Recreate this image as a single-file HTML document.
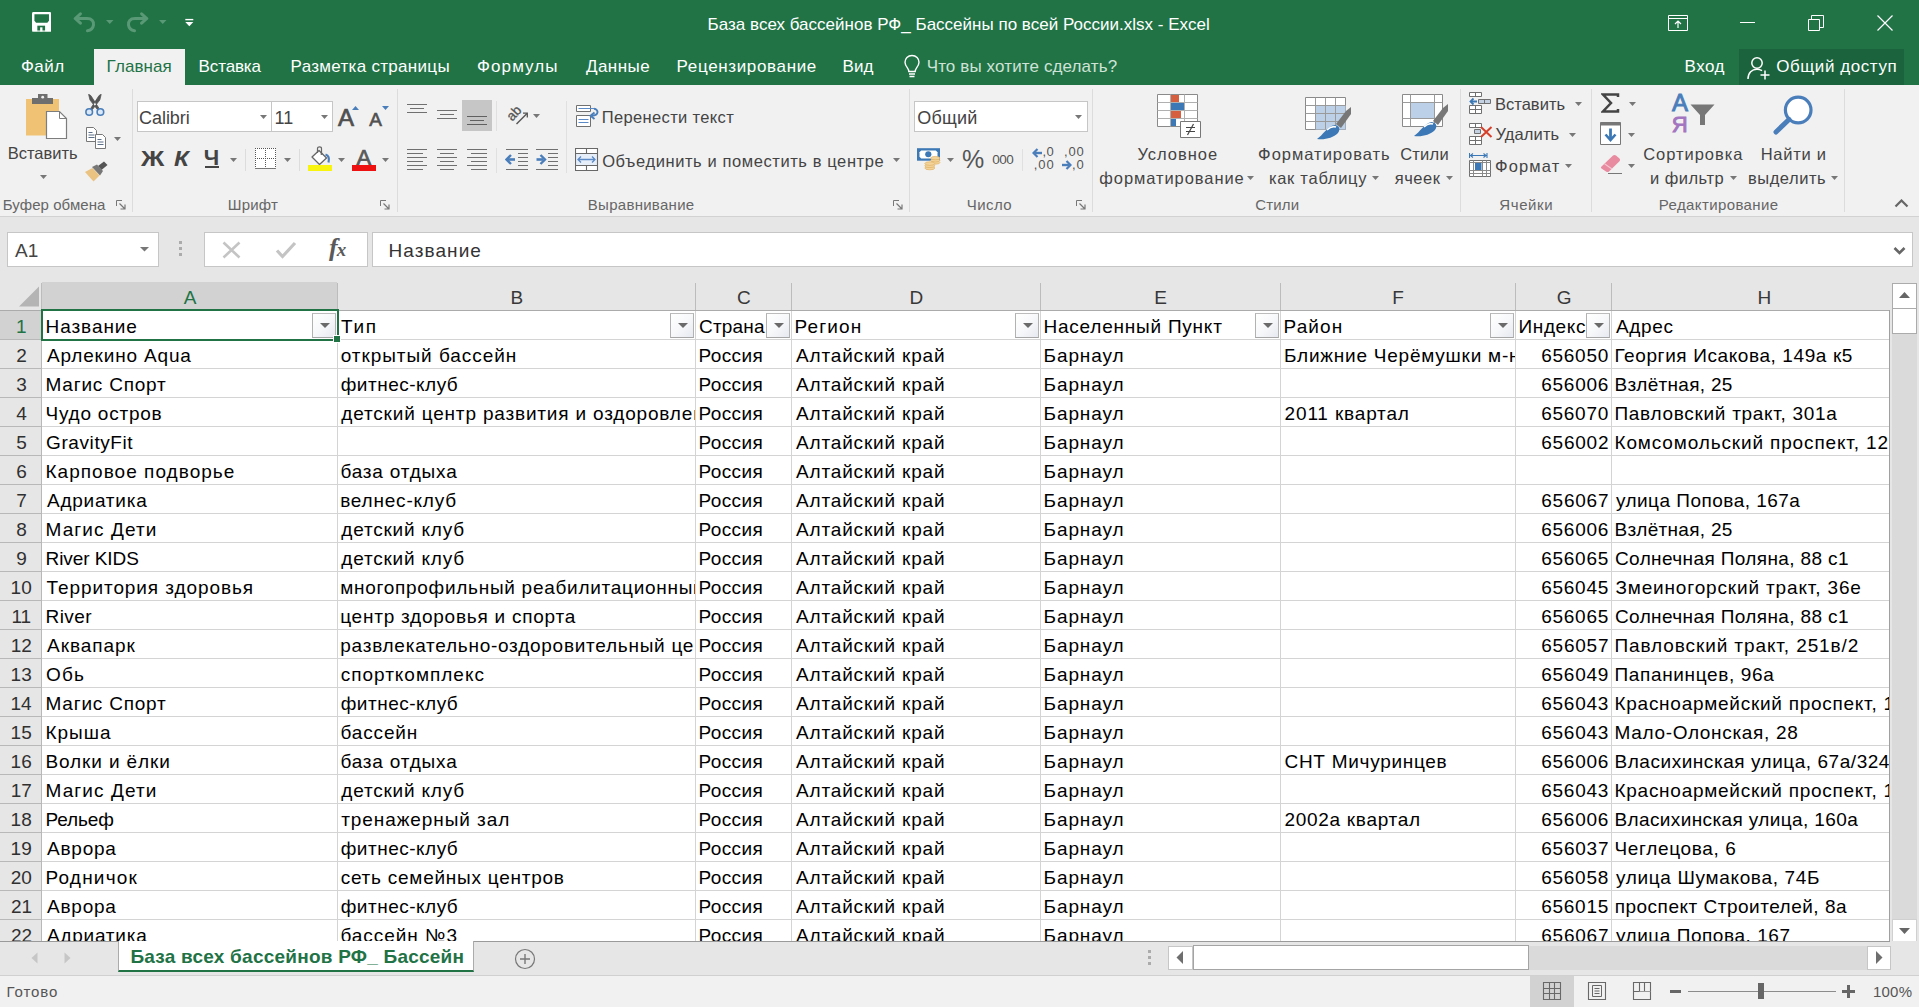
<!DOCTYPE html>
<html lang="ru"><head><meta charset="utf-8"><title>Excel</title><style>
html,body{margin:0;padding:0;}
body{width:1919px;height:1007px;overflow:hidden;position:relative;background:#e6e6e6;font-family:"Liberation Sans",sans-serif;}
div,span,svg{position:absolute;}
span{white-space:nowrap;}
.rowclip{left:0;width:337px;overflow:hidden;}
.cc{overflow:hidden;}
.fb{width:24px;height:25px;box-sizing:border-box;border:1px solid #b2b2b2;border-top-color:#bcbcbc;border-bottom:1px solid #a6a6a6;background:linear-gradient(135deg,#ffffff 0%,#f7f8fa 50%,#e6e9f0 100%);}
.fb i{position:absolute;left:6.5px;top:9px;width:0;height:0;border-left:5px solid transparent;border-right:5px solid transparent;border-top:5.5px solid #6a6a6a;}
</style></head><body>
<!-- title -->
<div style="left:0px;top:0px;width:1919px;height:85px;background:#217346;"></div>
<div style="left:94px;top:49px;width:91px;height:37px;background:#f1f1f1;"></div>
<svg style="left:32px;top:12px" width="19.400" height="19.600" viewBox="0 0 20 20"><rect x="0" y="0" width="20" height="20" rx="1.500" fill="#fff"/><path d="M2.500 2.200H17.500V9L15.800 11H4.200L2.500 9Z" fill="#217346"/><path d="M5.500 14H13.500V20H5.500Z" fill="#217346"/><path d="M8.400 15.700H10.800V20H8.400Z" fill="#fff"/><path d="M0 19H20V20H0Z" fill="#fff"/></svg>
<svg style="left:73px;top:12px" width="24" height="22" viewBox="0 0 24 22"><g fill="none" stroke="#5a9975" stroke-width="3" stroke-linecap="round" stroke-linejoin="round"><path d="M7.400 1.800L2.200 6.500L7.400 11.200"/><path d="M3 6.500H14C19 6.500 21 9.500 20.500 13C20 16.300 18 18.300 14.500 18.800"/></g></svg>
<svg style="left:106px;top:20px" width="8" height="4"><path d="M0 0H7.500L3.750 4Z" fill="#5a9975"/></svg>
<svg style="left:125px;top:12px" width="24" height="22" viewBox="0 0 24 22"><g fill="none" stroke="#5a9975" stroke-width="3" stroke-linecap="round" stroke-linejoin="round"><path d="M16.600 1.800L21.800 6.500L16.600 11.200"/><path d="M21 6.500H10C5 6.500 3 9.500 3.500 13C4 16.300 6 18.300 9.500 18.800"/></g></svg>
<svg style="left:158.500px;top:20px" width="8" height="4"><path d="M0 0H7.500L3.750 4Z" fill="#5a9975"/></svg>
<svg style="left:185px;top:18px" width="9" height="9"><path d="M0.300 1.600H8.300" stroke="#fff" stroke-width="1.400"/><path d="M0.300 4H8.300L4.300 8.300Z" fill="#fff"/></svg>
<span style="top:16px;font-size:17px;line-height:17px;left:707.6px;letter-spacing:0.01px;color:#fff;">База всех бассейнов РФ_ Бассейны по всей России.xlsx - Excel</span>
<svg style="left:1668px;top:15px" width="20" height="16" viewBox="0 0 20 16"><path d="M0.5 0.5H19.5V15.5H0.5Z" fill="none" stroke="#fff"/><path d="M0.5 3.5H19.5" stroke="#fff"/><path d="M10 13V6M7 9L10 6L13 9" fill="none" stroke="#fff" stroke-width="1.2"/></svg>
<div style="left:1740px;top:22px;width:15px;height:1px;background:#fff;"></div>
<svg style="left:1808px;top:15px" width="16" height="16" viewBox="0 0 16 16"><path d="M0.5 4.5H11.5V15.5H0.5Z M3.5 4.5V0.5H15.5V12.5H11.5" fill="none" stroke="#fff"/></svg>
<svg style="left:1877px;top:15px" width="16" height="16" viewBox="0 0 16 16"><path d="M0.5 0.5L15.5 15.5M15.5 0.5L0.5 15.5" fill="none" stroke="#fff" stroke-width="1.2"/></svg>
<span style="top:58px;font-size:17px;line-height:17px;left:21.0px;letter-spacing:0.43px;color:#fff;">Файл</span>
<span style="top:58px;font-size:17px;line-height:17px;left:106.6px;letter-spacing:0.07px;color:#217346;">Главная</span>
<span style="top:58px;font-size:17px;line-height:17px;left:198.6px;letter-spacing:-0.13px;color:#fff;">Вставка</span>
<span style="top:58px;font-size:17px;line-height:17px;left:290.6px;letter-spacing:0.30px;color:#fff;">Разметка страницы</span>
<span style="top:58px;font-size:17px;line-height:17px;left:477.0px;letter-spacing:1.10px;color:#fff;">Формулы</span>
<span style="top:58px;font-size:17px;line-height:17px;left:585.9px;letter-spacing:0.48px;color:#fff;">Данные</span>
<span style="top:58px;font-size:17px;line-height:17px;left:676.6px;letter-spacing:0.65px;color:#fff;">Рецензирование</span>
<span style="top:58px;font-size:17px;line-height:17px;left:842.6px;color:#fff;">Вид</span>
<svg style="left:903px;top:54px" width="18" height="25" viewBox="0 0 18 25"><path d="M9 1.5C4.8 1.5 2 4.6 2 8.2C2 10.6 3.2 12.2 4.4 13.8C5.3 15 5.8 16 5.8 17.5H12.2C12.2 16 12.7 15 13.6 13.8C14.8 12.2 16 10.6 16 8.2C16 4.6 13.2 1.5 9 1.5Z" fill="none" stroke="#fff" stroke-width="1.4"/><path d="M6 20H12M6.5 22.5H11.5" stroke="#fff" stroke-width="1.4"/></svg>
<span style="top:58px;font-size:17px;line-height:17px;left:926.7px;letter-spacing:0.12px;color:#cfe3d6;">Что вы хотите сделать?</span>
<span style="top:58px;font-size:17px;line-height:17px;left:1684.6px;letter-spacing:0.43px;color:#fff;">Вход</span>
<div style="left:1739px;top:49px;width:165px;height:36px;background:#1a633c;"></div>
<svg style="left:1746px;top:55px" width="26" height="26" viewBox="0 0 26 26"><circle cx="11" cy="8" r="5.2" fill="none" stroke="#fff" stroke-width="1.5"/><path d="M2 24C2 17.5 6 14.2 11 14.2C13 14.2 14.6 14.7 16 15.6" fill="none" stroke="#fff" stroke-width="1.5"/><path d="M19 15.5V24.5M14.5 20H23.5" stroke="#fff" stroke-width="1.5"/></svg>
<span style="top:58px;font-size:17px;line-height:17px;left:1776.2px;letter-spacing:0.57px;color:#fff;">Общий доступ</span>
<!-- ribbon -->
<div style="left:0px;top:85px;width:1919px;height:132px;background:#f1f1f1;"></div>
<div style="left:0px;top:216px;width:1919px;height:1px;background:#d2d2d2;"></div>
<svg style="left:24px;top:93px" width="46" height="48" viewBox="0 0 46 48">
<path d="M2 6H35V42.500H2Z" fill="#efc373"/>
<path d="M8 5H14V1H23.500V5H29V11H8Z" fill="#6e6e6e"/>
<circle cx="18.700" cy="4.200" r="1.400" fill="#f1f1f1"/>
<path d="M22.500 18.500H35.500L42.500 25.500V45.500H22.500Z" fill="#fff" stroke="#7d7d7d" stroke-width="1.200"/>
<path d="M35.500 18.500V25.500H42.500" fill="none" stroke="#7d7d7d"/></svg>
<span style="top:145px;font-size:16.5px;line-height:16px;left:7.7px;letter-spacing:0.01px;color:#444;">Вставить</span>
<svg style="left:40px;top:175px" width="7" height="4"><path d="M0 0H7L3.5 4Z" fill="#777"/></svg>
<svg style="left:84px;top:94px" width="22" height="23" viewBox="0 0 22 23">
<path d="M4.600 0.300L6.800 1.600L15.200 14.600L13.400 15.600L6 6Z M17.200 0.300L15 1.600L6.600 14.600L8.400 15.600L15.800 6Z" fill="#555" stroke="#555" stroke-width="0.800" stroke-linejoin="round"/>
<circle cx="5.200" cy="18" r="3.300" fill="#dbe8f6" stroke="#4a7ebb" stroke-width="1.600"/><circle cx="16.400" cy="18" r="3.300" fill="#dbe8f6" stroke="#4a7ebb" stroke-width="1.600"/></svg>
<svg style="left:85px;top:126px" width="22" height="24" viewBox="0 0 22 24">
<path d="M1.5 1.5H8.5L11.5 4.5V15.5H1.5Z" fill="#fff" stroke="#777"/>
<path d="M3.5 6.5H7.5M3.5 9H9.5M3.5 11.5H9.5" stroke="#5b6f88"/>
<path d="M10.5 8.5H17.5L20.5 11.5V22.5H10.5Z" fill="#fff" stroke="#777"/>
<path d="M12.5 13.5H16.5M12.5 16H18.5M12.5 18.5H18.5" stroke="#5b6f88"/></svg>
<svg style="left:114px;top:137px" width="7" height="4"><path d="M0 0H7L3.5 4Z" fill="#777"/></svg>
<svg style="left:84px;top:160px" width="25" height="22" viewBox="0 0 25 22">
<path d="M14 6L20 1.5L23.5 5L17.5 10Z" fill="#555"/>
<path d="M8 7L13 4.5L19 11L16 15.5Z" fill="#777"/>
<path d="M1 12L8.5 8L15.5 15.5L9.5 21.5Z" fill="#eac282"/></svg>
<span style="top:197px;font-size:15px;line-height:15px;left:2.8px;letter-spacing:0.06px;color:#666;">Буфер обмена</span>
<svg style="left:116px;top:200px" width="10" height="10" viewBox="0 0 10 10"><path d="M0.5 6V0.5H6" fill="none" stroke="#777"/><path d="M3.5 3.5L8.5 8.5M9 4.5V9H4.5" fill="none" stroke="#777" stroke-width="1.2"/></svg>
<div style="left:132px;top:89px;width:1px;height:123px;background:#dcdcdc;"></div>
<div style="left:137px;top:101px;width:135px;height:31px;background:#fff;border:1px solid #c6c6c6;box-sizing:border-box;"></div>
<div style="left:271px;top:101px;width:62px;height:31px;background:#fff;border:1px solid #c6c6c6;box-sizing:border-box;"></div>
<span style="top:109px;font-size:18px;line-height:18px;left:139.1px;letter-spacing:-0.07px;color:#444;">Calibri</span>
<svg style="left:260px;top:115px" width="7" height="4"><path d="M0 0H7L3.5 4Z" fill="#777"/></svg>
<span style="top:109px;font-size:18px;line-height:18px;left:274.6px;letter-spacing:0.10px;color:#444;">11</span>
<svg style="left:321px;top:115px" width="7" height="4"><path d="M0 0H7L3.5 4Z" fill="#777"/></svg>
<span style="top:106px;font-size:24px;line-height:24px;left:337.9px;color:#505050;-webkit-text-stroke:0.7px #505050;">A</span>
<svg style="left:352px;top:106px" width="7" height="4"><path d="M0 4H7L3.5 0Z" fill="#4a7ebb"/></svg>
<span style="top:110px;font-size:19px;line-height:19px;left:369.2px;color:#505050;-webkit-text-stroke:0.6px #505050;">A</span>
<svg style="left:381.5px;top:106px" width="7" height="4"><path d="M0 0H7L3.5 4Z" fill="#4a7ebb"/></svg>
<span style="top:148px;font-size:22px;line-height:22px;left:140.5px;color:#444;font-weight:bold;transform:scaleX(1.17);transform-origin:0 0;">Ж</span>
<span style="top:148px;font-size:22px;line-height:22px;left:173.6px;color:#444;font-weight:bold;font-style:italic;transform:scaleX(1.1);transform-origin:0 0;">К</span>
<span style="top:147px;font-size:22px;line-height:22px;left:203.8px;color:#444;font-weight:bold;">Ч</span>
<div style="left:205px;top:166px;width:14px;height:2px;background:#444;"></div>
<svg style="left:230px;top:158px" width="7" height="4"><path d="M0 0H7L3.5 4Z" fill="#777"/></svg>
<div style="left:245px;top:149px;width:1px;height:22px;background:#dcdcdc;"></div>
<svg style="left:254px;top:147px" width="23" height="23" viewBox="0 0 23 23"><path d="M1 1H22V21H1Z" fill="#fff"/><path d="M1.500 1V21M21.500 1V21M11.500 1V21M1 1.500H22M1 11.500H22" fill="none" stroke="#555" stroke-width="1" stroke-dasharray="1 1"/><path d="M1 21.500H22" stroke="#777"/></svg>
<svg style="left:284px;top:158px" width="7" height="4"><path d="M0 0H7L3.5 4Z" fill="#777"/></svg>
<div style="left:299px;top:149px;width:1px;height:22px;background:#dcdcdc;"></div>
<svg style="left:309px;top:145px" width="26" height="21" viewBox="0 0 26 21">
<path d="M10 5.500L17.500 13L10.500 19.500L3 12Z" fill="#fff" stroke="#666" stroke-width="1.300" stroke-linejoin="round"/>
<path d="M8.500 8V3.500C8.500 1.200 12.500 1.200 12.500 3.500V8.500" fill="none" stroke="#666" stroke-width="1.200"/>
<circle cx="12.500" cy="9" r="1" fill="#666"/>
<path d="M16.500 9.500C19.500 10.500 20.500 13.500 19.500 17.500" fill="none" stroke="#4a7ebb" stroke-width="2.200"/></svg>
<div style="left:308px;top:165px;width:24px;height:6px;background:#f8f410;"></div>
<svg style="left:338px;top:158px" width="7" height="4"><path d="M0 0H7L3.5 4Z" fill="#777"/></svg>
<span style="top:147px;font-size:22px;line-height:22px;left:356.4px;color:#5a5a5a;-webkit-text-stroke:0.7px #5a5a5a;">A</span>
<div style="left:352px;top:165px;width:24px;height:6px;background:#ee1111;"></div>
<svg style="left:382px;top:158px" width="7" height="4"><path d="M0 0H7L3.5 4Z" fill="#777"/></svg>
<span style="top:197px;font-size:15px;line-height:15px;left:227.8px;letter-spacing:0.15px;color:#666;">Шрифт</span>
<svg style="left:380px;top:200px" width="10" height="10" viewBox="0 0 10 10"><path d="M0.5 6V0.5H6" fill="none" stroke="#777"/><path d="M3.5 3.5L8.5 8.5M9 4.5V9H4.5" fill="none" stroke="#777" stroke-width="1.2"/></svg>
<div style="left:397px;top:89px;width:1px;height:123px;background:#dcdcdc;"></div>
<div style="left:407px;top:104px;width:20px;height:1px;background:#707070;"></div><div style="left:410px;top:108px;width:14px;height:1px;background:#707070;"></div><div style="left:407px;top:112px;width:20px;height:1px;background:#707070;"></div>
<div style="left:437px;top:110px;width:20px;height:1px;background:#707070;"></div><div style="left:440px;top:114px;width:14px;height:1px;background:#707070;"></div><div style="left:437px;top:118px;width:20px;height:1px;background:#707070;"></div>
<div style="left:462px;top:100px;width:30px;height:31px;background:#c6c6c6;"></div>
<div style="left:467px;top:116px;width:20px;height:1px;background:#606060;"></div><div style="left:470px;top:120px;width:14px;height:1px;background:#606060;"></div><div style="left:467px;top:124px;width:20px;height:1px;background:#606060;"></div>
<div style="left:496px;top:101px;width:1px;height:30px;background:#e0e0e0;"></div>
<svg style="left:504px;top:102px" width="28" height="26" viewBox="0 0 28 26"><text x="0" y="0" font-family="Liberation Sans" font-size="13.500" fill="#555" stroke="#555" stroke-width="0.300" transform="translate(8.300 19.800) rotate(-48)">ab</text><path d="M12.500 22L23 11.500" fill="none" stroke="#555" stroke-width="1.400"/><path d="M19 11.200H23.300V15.500" fill="none" stroke="#555" stroke-width="1.300"/></svg>
<svg style="left:533px;top:114px" width="7" height="4"><path d="M0 0H7L3.5 4Z" fill="#777"/></svg>
<div style="left:566px;top:101px;width:1px;height:72px;background:#e0e0e0;"></div>
<svg style="left:575px;top:104px" width="25" height="24" viewBox="0 0 25 24">
<path d="M1.500 1.500H15.500V7.500H1.500Z" fill="#fff" stroke="#707070" stroke-width="1"/>
<path d="M1.500 11.500H15.500V22.500H1.500Z" fill="#fff" stroke="#707070" stroke-width="1"/>
<path d="M3.500 4.500H19" stroke="#5b8ac6" stroke-width="1"/>
<path d="M3.500 15.500H13.500M3.500 18.500H13.500" stroke="#5b8ac6" stroke-width="1"/>
<path d="M19 4.800C24 5.500 24 11.500 17 11.800" fill="none" stroke="#4a7ebb" stroke-width="1.900"/>
<path d="M19.500 8.500L15.500 11.800L19.500 15" fill="none" stroke="#4a7ebb" stroke-width="1.900"/></svg>
<span style="top:109px;font-size:16.5px;line-height:16px;left:601.7px;letter-spacing:0.36px;color:#444;">Перенести текст</span>
<div style="left:407px;top:149px;width:20px;height:1px;background:#707070;"></div><div style="left:407px;top:153px;width:16px;height:1px;background:#707070;"></div><div style="left:407px;top:157px;width:20px;height:1px;background:#707070;"></div><div style="left:407px;top:161px;width:16px;height:1px;background:#707070;"></div><div style="left:407px;top:165px;width:20px;height:1px;background:#707070;"></div><div style="left:407px;top:169px;width:16px;height:1px;background:#707070;"></div>
<div style="left:437px;top:149px;width:20px;height:1px;background:#707070;"></div><div style="left:440px;top:153px;width:14px;height:1px;background:#707070;"></div><div style="left:437px;top:157px;width:20px;height:1px;background:#707070;"></div><div style="left:440px;top:161px;width:14px;height:1px;background:#707070;"></div><div style="left:437px;top:165px;width:20px;height:1px;background:#707070;"></div><div style="left:440px;top:169px;width:14px;height:1px;background:#707070;"></div>
<div style="left:467px;top:149px;width:20px;height:1px;background:#707070;"></div><div style="left:471px;top:153px;width:16px;height:1px;background:#707070;"></div><div style="left:467px;top:157px;width:20px;height:1px;background:#707070;"></div><div style="left:471px;top:161px;width:16px;height:1px;background:#707070;"></div><div style="left:467px;top:165px;width:20px;height:1px;background:#707070;"></div><div style="left:471px;top:169px;width:16px;height:1px;background:#707070;"></div>
<div style="left:496px;top:148px;width:1px;height:25px;background:#e0e0e0;"></div>
<div style="left:506px;top:149px;width:22px;height:1px;background:#707070;"></div><div style="left:517.5px;top:153px;width:10.5px;height:1px;background:#707070;"></div><div style="left:517.5px;top:157px;width:10.5px;height:1px;background:#707070;"></div><div style="left:517.5px;top:161px;width:10.5px;height:1px;background:#707070;"></div><div style="left:517.5px;top:165px;width:10.5px;height:1px;background:#707070;"></div><div style="left:506px;top:169px;width:22px;height:1px;background:#707070;"></div>
<svg style="left:505px;top:154px" width="11" height="11"><path d="M10 5.500H3" fill="none" stroke="#4a7ebb" stroke-width="2.600"/><path d="M6 1L1.500 5.500L6 10" fill="none" stroke="#4a7ebb" stroke-width="2.400"/></svg>
<div style="left:536px;top:149px;width:22px;height:1px;background:#707070;"></div><div style="left:547.5px;top:153px;width:10.5px;height:1px;background:#707070;"></div><div style="left:547.5px;top:157px;width:10.5px;height:1px;background:#707070;"></div><div style="left:547.5px;top:161px;width:10.5px;height:1px;background:#707070;"></div><div style="left:547.5px;top:165px;width:10.5px;height:1px;background:#707070;"></div><div style="left:536px;top:169px;width:22px;height:1px;background:#707070;"></div>
<svg style="left:536px;top:154px" width="11" height="11"><path d="M0.500 5.500H7.500" fill="none" stroke="#4a7ebb" stroke-width="2.600"/><path d="M4.500 1L9 5.500L4.500 10" fill="none" stroke="#4a7ebb" stroke-width="2.400"/></svg>
<svg style="left:575px;top:148px" width="24" height="24" viewBox="0 0 24 24">
<path d="M0.500 0.500H22.500V22.500H0.500Z" fill="#fff"/>
<path d="M0.500 5.500H22.500V17.500H0.500Z" fill="#e6eef9"/>
<path d="M0.500 0.500H22.500V22.500H0.500Z M0.500 5.500H22.500 M0.500 17.500H22.500 M11.500 0.500V5.500 M11.500 17.500V22.500" fill="none" stroke="#686868" stroke-width="1.100"/>
<path d="M3 11.500H20M6 8.500L3 11.500L6 14.500M17 8.500L20 11.500L17 14.500" fill="none" stroke="#5b8ac6" stroke-width="1.300"/></svg>
<span style="top:153px;font-size:16.5px;line-height:16px;left:602.2px;letter-spacing:0.59px;color:#444;">Объединить и поместить в центре</span>
<svg style="left:893px;top:158px" width="7" height="4"><path d="M0 0H7L3.5 4Z" fill="#777"/></svg>
<span style="top:197px;font-size:15px;line-height:15px;left:587.8px;letter-spacing:0.28px;color:#666;">Выравнивание</span>
<svg style="left:893px;top:200px" width="10" height="10" viewBox="0 0 10 10"><path d="M0.5 6V0.5H6" fill="none" stroke="#777"/><path d="M3.5 3.5L8.5 8.5M9 4.5V9H4.5" fill="none" stroke="#777" stroke-width="1.2"/></svg>
<div style="left:909px;top:89px;width:1px;height:123px;background:#dcdcdc;"></div>
<div style="left:914px;top:101px;width:174px;height:31px;background:#fff;border:1px solid #c6c6c6;box-sizing:border-box;"></div>
<span style="top:109px;font-size:18px;line-height:18px;left:917.2px;letter-spacing:0.20px;color:#444;">Общий</span>
<svg style="left:1075px;top:115px" width="7" height="4"><path d="M0 0H7L3.5 4Z" fill="#777"/></svg>
<svg style="left:916px;top:147px" width="26" height="24" viewBox="0 0 26 24">
<path d="M1 1.200H24V13.700H1Z" fill="#3b78b5"/>
<path d="M3.500 5.200L5.200 3.500H19.800L21.500 5.200V9.700L19.800 11.400H5.200L3.500 9.700Z" fill="#fff"/>
<ellipse cx="12.300" cy="7.200" rx="3.100" ry="3" fill="#3b78b5"/>
<g fill="#f3d39a" stroke="#e0b264" stroke-width="0.700"><ellipse cx="19.300" cy="15.500" rx="4.600" ry="1.700"/><ellipse cx="19.300" cy="13.300" rx="4.600" ry="1.700"/><ellipse cx="19.300" cy="11.100" rx="4.600" ry="1.700"/>
<ellipse cx="13.800" cy="21" rx="5" ry="1.800"/><ellipse cx="13.800" cy="18.800" rx="5" ry="1.800"/><ellipse cx="13.800" cy="16.600" rx="5" ry="1.800"/></g></svg>
<svg style="left:947px;top:158px" width="7" height="4"><path d="M0 0H7L3.5 4Z" fill="#777"/></svg>
<span style="top:147px;font-size:25px;line-height:25px;left:962.1px;color:#555;">%</span>
<span style="top:153px;font-size:13.5px;line-height:14px;left:992.2px;letter-spacing:-0.50px;color:#555;">000</span>
<div style="left:1022px;top:149px;width:1px;height:22px;background:#e0e0e0;"></div>
<svg style="left:1032px;top:148px" width="11" height="10"><path d="M10 5H3" fill="none" stroke="#4a7ebb" stroke-width="2.400"/><path d="M5.500 1L1.500 5L5.500 9" fill="none" stroke="#4a7ebb" stroke-width="2.200"/></svg>
<span style="top:145px;font-size:13px;line-height:13px;left:1042.4px;letter-spacing:0.50px;color:#555;">,0</span>
<span style="top:158px;font-size:13px;line-height:13px;left:1033.7px;letter-spacing:1.00px;color:#555;">,00</span>
<span style="top:145px;font-size:13px;line-height:13px;left:1064.1px;letter-spacing:0.75px;color:#555;">,00</span>
<svg style="left:1061px;top:160px" width="11" height="10"><path d="M1 5H8" fill="none" stroke="#4a7ebb" stroke-width="2.400"/><path d="M5.500 1L9.500 5L5.500 9" fill="none" stroke="#4a7ebb" stroke-width="2.200"/></svg>
<span style="top:158px;font-size:13px;line-height:13px;left:1072.1px;letter-spacing:0.70px;color:#555;">,0</span>
<span style="top:197px;font-size:15px;line-height:15px;left:966.8px;letter-spacing:0.43px;color:#666;">Число</span>
<svg style="left:1076px;top:200px" width="10" height="10" viewBox="0 0 10 10"><path d="M0.5 6V0.5H6" fill="none" stroke="#777"/><path d="M3.5 3.5L8.5 8.5M9 4.5V9H4.5" fill="none" stroke="#777" stroke-width="1.2"/></svg>
<div style="left:1092px;top:89px;width:1px;height:123px;background:#dcdcdc;"></div>
<svg style="left:1157px;top:94px" width="46" height="45" viewBox="0 0 46 45">
<path d="M0.5 0.5H40.5V32.5H0.5Z" fill="#fff" stroke="#8a8a8a"/>
<path d="M0.5 8.5H40.5M0.5 16.5H40.5M0.5 24.5H40.5M13.5 0.5V32.5M27.5 0.5V32.5" stroke="#b0b0b0" fill="none"/>
<path d="M14 1H22V8H14Z" fill="#d65f40"/><path d="M14 9H27V16H14Z" fill="#3b78b5"/><path d="M14 17H24V24H14Z" fill="#d65f40"/><path d="M14 25H19V32H14Z" fill="#3b78b5"/>
<path d="M23.500 27.500H43.500V43.500H23.500Z" fill="#fff" stroke="#777"/>
<path d="M29 33.500H38M29 37.500H38M36.500 30L30.500 41" stroke="#444" stroke-width="1.2" fill="none"/></svg>
<span style="top:146px;font-size:16.5px;line-height:16px;left:1137.5px;letter-spacing:0.97px;color:#444;">Условное</span>
<span style="top:170px;font-size:16.5px;line-height:16px;left:1099.3px;letter-spacing:0.92px;color:#444;">форматирование</span>
<svg style="left:1247px;top:176px" width="7" height="4"><path d="M0 0H7L3.5 4Z" fill="#777"/></svg>
<svg style="left:1305px;top:97px" width="47" height="44" viewBox="0 0 47 44">
<path d="M0.5 0.5H40.5V32.5H0.5Z" fill="#fff" stroke="#8a8a8a"/>
<path d="M10.500 8.500H40.500V32.500H10.500Z" fill="#bcd0e8"/>
<path d="M0.5 8.5H40.5M0.5 16.5H40.5M0.5 24.5H40.5M10.5 0.5V32.5M20.5 0.5V32.5M30.5 0.5V32.500" stroke="#9a9a9a" fill="none"/>
<path d="M31 27L41 14L46 10V17L36 31Z" fill="#777"/>
<path d="M12 42C18 38 22 30 29 28C34 28 36 32 33 36C28 41 20 43 12 42Z" fill="#3b78b5"/>
<path d="M22 33C25 30 28 29 31 30" stroke="#fff" stroke-width="1.5" fill="none"/></svg>
<span style="top:146px;font-size:16.5px;line-height:16px;left:1258.1px;letter-spacing:0.99px;color:#444;">Форматировать</span>
<span style="top:170px;font-size:16.5px;line-height:16px;left:1268.9px;letter-spacing:0.73px;color:#444;">как таблицу</span>
<svg style="left:1372px;top:176px" width="7" height="4"><path d="M0 0H7L3.5 4Z" fill="#777"/></svg>
<svg style="left:1402px;top:94px" width="47" height="44" viewBox="0 0 47 44">
<path d="M0.5 0.5H40.5V32.5H0.5Z" fill="#fff" stroke="#8a8a8a"/>
<path d="M0.5 8.5H40.5M0.5 24.5H40.5M8.5 0.5V32.5M32.5 0.5V32.5" stroke="#9a9a9a" fill="none"/>
<path d="M9 9H32V24H9Z" fill="#bcd0e8"/>
<path d="M31 27L41 14L46 10V17L36 31Z" fill="#777"/>
<path d="M12 42C18 38 22 30 29 28C34 28 36 32 33 36C28 41 20 43 12 42Z" fill="#3b78b5"/>
<path d="M22 33C25 30 28 29 31 30" stroke="#fff" stroke-width="1.5" fill="none"/></svg>
<span style="top:146px;font-size:16.5px;line-height:16px;left:1400.2px;letter-spacing:0.22px;color:#444;">Стили</span>
<span style="top:170px;font-size:16.5px;line-height:16px;left:1394.8px;letter-spacing:0.50px;color:#444;">ячеек</span>
<svg style="left:1446px;top:176px" width="7" height="4"><path d="M0 0H7L3.5 4Z" fill="#777"/></svg>
<span style="top:197px;font-size:15px;line-height:15px;left:1255.2px;letter-spacing:0.17px;color:#666;">Стили</span>
<div style="left:1460px;top:89px;width:1px;height:123px;background:#dcdcdc;"></div>
<svg style="left:1469px;top:92px" width="23" height="23" viewBox="0 0 23 23">
<path d="M0.500 0.500H12.500V4.500H0.500Z M6.500 0.500V4.500" fill="#fff" stroke="#707070"/>
<path d="M0.500 13.500H12.500V21.500H0.500Z M6.500 13.500V21.500 M0.500 17.500H12.500" fill="#fff" stroke="#707070"/>
<path d="M9.500 7.500H21.500V11.500H9.500Z" fill="#c3d1e3" stroke="#707070"/><path d="M15.500 7.500V11.500" stroke="#707070"/>
<path d="M8 9.500H2" fill="none" stroke="#3b78b5" stroke-width="2"/><path d="M4.500 6.500L1.500 9.500L4.500 12.500" fill="none" stroke="#3b78b5" stroke-width="1.800"/></svg>
<span style="top:96px;font-size:16.5px;line-height:16px;left:1494.9px;letter-spacing:0.04px;color:#444;">Вставить</span>
<svg style="left:1575px;top:102px" width="7" height="4"><path d="M0 0H7L3.5 4Z" fill="#777"/></svg>
<svg style="left:1469px;top:123px" width="25" height="23" viewBox="0 0 25 23">
<path d="M0.500 0.500H12.500V4.500H0.500Z M6.500 0.500V4.500" fill="#fff" stroke="#707070"/>
<path d="M0.500 13.500H12.500V21.500H0.500Z M6.500 13.500V21.500 M0.500 17.500H12.500" fill="#fff" stroke="#707070"/>
<path d="M5.500 6.500H11.500V10.500H5.500Z" fill="#c3d1e3" stroke="#707070"/>
<path d="M12 4L22.500 14M22.500 4L12 14" stroke="#d6402a" stroke-width="2" fill="none"/></svg>
<span style="top:126px;font-size:16.5px;line-height:16px;left:1495.5px;letter-spacing:0.12px;color:#444;">Удалить</span>
<svg style="left:1569px;top:133px" width="7" height="4"><path d="M0 0H7L3.5 4Z" fill="#777"/></svg>
<svg style="left:1469px;top:153px" width="23" height="25" viewBox="0 0 23 25">
<path d="M1 2.500H17.500M0.500 0V5M18 0V5M4 0.500L1.500 2.500L4 4.500M14.500 0.500L17 2.500L14.500 4.500" fill="none" stroke="#3b78b5" stroke-width="1.100"/>
<path d="M0.500 7.500H21.500V23.500H0.500Z" fill="#fff" stroke="#707070"/>
<path d="M0.500 9.500H21.500M0.500 17.500H21.500M0.500 20.500H21.500M4.500 7.500V23.500M13.500 7.500V23.500M17.500 7.500V23.500" stroke="#8a8a8a" fill="none"/>
<path d="M6 10H12.500V17H6Z" fill="#3b78b5"/></svg>
<span style="top:158px;font-size:16.5px;line-height:16px;left:1495.1px;letter-spacing:1.10px;color:#444;">Формат</span>
<svg style="left:1565px;top:164px" width="7" height="4"><path d="M0 0H7L3.5 4Z" fill="#777"/></svg>
<span style="top:197px;font-size:15px;line-height:15px;left:1499.3px;letter-spacing:0.60px;color:#666;">Ячейки</span>
<div style="left:1591px;top:89px;width:1px;height:123px;background:#dcdcdc;"></div>
<svg style="left:1601px;top:93px" width="19" height="20" viewBox="0 0 19 20"><path d="M17 4V1.500H2L10 10L2 18.500H17V16" fill="none" stroke="#444" stroke-width="2.5"/></svg>
<svg style="left:1629px;top:102px" width="7" height="4"><path d="M0 0H7L3.5 4Z" fill="#777"/></svg>
<svg style="left:1600px;top:122px" width="22" height="23" viewBox="0 0 22 23"><path d="M0.5 0.5H20.500V22.500H0.5Z" fill="#fff" stroke="#777"/><path d="M0.5 2H20.500" stroke="#777" stroke-width="3"/><path d="M10.500 6.500V17" fill="none" stroke="#3b78b5" stroke-width="2.800"/><path d="M5.500 12.500L10.500 18L15.500 12.500" fill="none" stroke="#3b78b5" stroke-width="2.600"/></svg>
<svg style="left:1628px;top:133px" width="7" height="4"><path d="M0 0H7L3.5 4Z" fill="#777"/></svg>
<svg style="left:1600px;top:154px" width="23" height="21" viewBox="0 0 23 21"><path d="M1.500 12.500L13 1.500C14 0.700 15 0.700 16 1.500L19.500 4.500C20.300 5.300 20.300 6.300 19.500 7.200L9 17.500C8 18.300 7 18.300 6 17.500L1.500 14.500C0.800 13.800 0.800 13.200 1.500 12.500Z" fill="#e88ba0"/><path d="M4.500 9.800L12 15" stroke="#f5c6d0" stroke-width="1.200"/><path d="M8 19.500H22" stroke="#777"/></svg>
<svg style="left:1628px;top:164px" width="7" height="4"><path d="M0 0H7L3.5 4Z" fill="#777"/></svg>
<span style="top:91px;font-size:24px;line-height:24px;left:1672.1px;color:#4a7ebb;-webkit-text-stroke:0.9px #4a7ebb;">А</span>
<span style="top:114px;font-size:22px;line-height:22px;left:1671.7px;color:#a374c0;-webkit-text-stroke:0.9px #a374c0;">Я</span>
<svg style="left:1690px;top:104px" width="25" height="22" viewBox="0 0 25 22"><path d="M0.5 0.5H24.500L15 11V21H10V11Z" fill="#777"/></svg>
<span style="top:146px;font-size:16.5px;line-height:16px;left:1643.2px;letter-spacing:0.97px;color:#444;">Сортировка</span>
<span style="top:170px;font-size:16.5px;line-height:16px;left:1649.9px;letter-spacing:0.50px;color:#444;">и фильтр</span>
<svg style="left:1730px;top:176px" width="7" height="4"><path d="M0 0H7L3.5 4Z" fill="#777"/></svg>
<svg style="left:1771px;top:94px" width="44" height="43" viewBox="0 0 44 43"><circle cx="27.200" cy="16" r="12.800" fill="#fff" stroke="#4a7ebb" stroke-width="3.200"/><path d="M18 25.500L5 38" stroke="#4a7ebb" stroke-width="5" stroke-linecap="round"/></svg>
<span style="top:146px;font-size:16.5px;line-height:16px;left:1760.7px;letter-spacing:0.75px;color:#444;">Найти и</span>
<span style="top:170px;font-size:16.5px;line-height:16px;left:1747.9px;letter-spacing:0.56px;color:#444;">выделить</span>
<svg style="left:1831px;top:176px" width="7" height="4"><path d="M0 0H7L3.5 4Z" fill="#777"/></svg>
<span style="top:197px;font-size:15px;line-height:15px;left:1658.8px;letter-spacing:0.39px;color:#666;">Редактирование</span>
<div style="left:1844px;top:89px;width:1px;height:123px;background:#dcdcdc;"></div>
<svg style="left:1894px;top:199px" width="15" height="9" viewBox="0 0 15 9"><path d="M1.500 7.500L7.500 1.500L13.500 7.500" fill="none" stroke="#666" stroke-width="2.2"/></svg>
<!-- formula -->
<div style="left:0px;top:217px;width:1919px;height:66px;background:#e6e6e6;"></div>
<div style="left:7px;top:232px;width:152px;height:35px;background:#fff;border:1px solid #c6c6c6;box-sizing:border-box;"></div>
<span style="top:241px;font-size:19px;line-height:19px;left:15.0px;letter-spacing:0.20px;color:#444;">A1</span>
<svg style="left:140px;top:247px" width="9" height="5"><path d="M0 0H9L4.5 4.5Z" fill="#777"/></svg>
<div style="left:179px;top:241px;width:3px;height:3px;background:#ababab;"></div>
<div style="left:179px;top:247px;width:3px;height:3px;background:#ababab;"></div>
<div style="left:179px;top:253px;width:3px;height:3px;background:#ababab;"></div>
<div style="left:204px;top:232px;width:164px;height:35px;background:#fff;border:1px solid #c6c6c6;box-sizing:border-box;"></div>
<svg style="left:222px;top:241px" width="19" height="18" viewBox="0 0 19 18"><path d="M1.5 1.5L17.5 16.5M17.5 1.5L1.5 16.5" stroke="#c4c4c4" stroke-width="2.600" fill="none"/></svg>
<svg style="left:275px;top:241px" width="22" height="18" viewBox="0 0 22 18"><path d="M2 9.5L7.5 15.5L20 2" stroke="#c4c4c4" stroke-width="3.200" fill="none"/></svg>
<span style="left:329px;top:233px;font-family:'Liberation Serif',serif;font-style:italic;font-weight:bold;font-size:26px;line-height:30px;color:#5a5a5a;letter-spacing:-1px">f<span style="position:static;font-size:19px">x</span></span>
<div style="left:372px;top:232px;width:1541px;height:35px;background:#fff;border:1px solid #c6c6c6;box-sizing:border-box;"></div>
<span style="top:241px;font-size:19px;line-height:19px;left:388.5px;letter-spacing:1.07px;color:#333;">Название</span>
<svg style="left:1893px;top:246px" width="13" height="10" viewBox="0 0 13 10"><path d="M1.5 2L6.5 7L11.5 2" stroke="#666" stroke-width="2.6" fill="none"/></svg>
<!-- grid -->
<div style="left:0px;top:282px;width:1919px;height:659px;background:#e6e6e6;"></div>
<div style="left:42px;top:311px;width:1847px;height:630px;background:#fff;"></div>
<div style="left:42px;top:282px;width:295px;height:28px;background:#d2d2d2;"></div>
<div style="left:337px;top:283px;width:1px;height:28px;background:#bcbcbc;"></div>
<span style="top:288px;font-size:19px;line-height:19px;left:183.7px;color:#217346;">A</span>
<div style="left:695px;top:283px;width:1px;height:28px;background:#bcbcbc;"></div>
<span style="top:288px;font-size:19px;line-height:19px;left:510.4px;color:#383838;">B</span>
<div style="left:791px;top:283px;width:1px;height:28px;background:#bcbcbc;"></div>
<span style="top:288px;font-size:19px;line-height:19px;left:737.0px;color:#383838;">C</span>
<div style="left:1040px;top:283px;width:1px;height:28px;background:#bcbcbc;"></div>
<span style="top:288px;font-size:19px;line-height:19px;left:909.4px;color:#383838;">D</span>
<div style="left:1280px;top:283px;width:1px;height:28px;background:#bcbcbc;"></div>
<span style="top:288px;font-size:19px;line-height:19px;left:1154.3px;color:#383838;">E</span>
<div style="left:1515px;top:283px;width:1px;height:28px;background:#bcbcbc;"></div>
<span style="top:288px;font-size:19px;line-height:19px;left:1392.3px;color:#383838;">F</span>
<div style="left:1611px;top:283px;width:1px;height:28px;background:#bcbcbc;"></div>
<span style="top:288px;font-size:19px;line-height:19px;left:1556.8px;color:#383838;">G</span>
<span style="top:288px;font-size:19px;line-height:19px;left:1757.4px;color:#383838;">H</span>
<div style="left:41px;top:283px;width:1px;height:28px;background:#bcbcbc;"></div>
<div style="left:0px;top:310px;width:1890px;height:1px;background:#ababab;"></div>
<svg style="left:18px;top:286px" width="22" height="21"><path d="M21 0.5V20.5H1Z" fill="#b4b4b4"/></svg>
<div style="left:0px;top:311px;width:41px;height:28px;background:#d2d2d2;"></div>
<div class="rowclip" style="top:311px;height:28px">
<span style="top:6px;font-size:19px;line-height:19px;left:16.0px;color:#217346;">1</span>
<span style="top:6px;font-size:19px;line-height:19px;left:45.5px;letter-spacing:0.93px;">Название</span>
</div>
<div class="cc" style="left:338px;top:311px;width:357px;height:28px"><span style="top:6px;font-size:19px;line-height:19px;left:3.1px;letter-spacing:1.60px;">Тип</span></div>
<div class="cc" style="left:696px;top:311px;width:95px;height:28px"><span style="top:6px;font-size:19px;line-height:19px;left:3.0px;letter-spacing:0.20px;">Страна</span></div>
<div class="cc" style="left:792px;top:311px;width:248px;height:28px"><span style="top:6px;font-size:19px;line-height:19px;left:2.5px;letter-spacing:1.16px;">Регион</span></div>
<div class="cc" style="left:1041px;top:311px;width:239px;height:28px"><span style="top:6px;font-size:19px;line-height:19px;left:2.5px;letter-spacing:0.77px;">Населенный Пункт</span></div>
<div class="cc" style="left:1281px;top:311px;width:234px;height:28px"><span style="top:6px;font-size:19px;line-height:19px;left:2.5px;letter-spacing:1.12px;">Район</span></div>
<div class="cc" style="left:1516px;top:311px;width:95px;height:28px"><span style="top:6px;font-size:19px;line-height:19px;left:2.5px;letter-spacing:0.62px;">Индекс</span></div>
<div class="cc" style="left:1612px;top:311px;width:277px;height:28px"><span style="top:6px;font-size:19px;line-height:19px;left:4.0px;letter-spacing:0.63px;">Адрес</span></div>
<div style="left:0px;top:339px;width:41px;height:1px;background:#b8b8b8;"></div>
<div style="left:42px;top:339px;width:1847px;height:1px;background:#d4d4d4;"></div>
<div class="rowclip" style="top:340px;height:28px">
<span style="top:6px;font-size:19px;line-height:19px;left:16.2px;color:#303030;">2</span>
<span style="top:6px;font-size:19px;line-height:19px;left:47.0px;letter-spacing:0.83px;">Арлекино Aqua</span>
</div>
<div class="cc" style="left:338px;top:340px;width:357px;height:28px"><span style="top:6px;font-size:19px;line-height:19px;left:2.7px;letter-spacing:0.95px;">открытый бассейн</span></div>
<div class="cc" style="left:696px;top:340px;width:95px;height:28px"><span style="top:6px;font-size:19px;line-height:19px;left:2.5px;letter-spacing:0.40px;">Россия</span></div>
<div class="cc" style="left:792px;top:340px;width:248px;height:28px"><span style="top:6px;font-size:19px;line-height:19px;left:4.0px;letter-spacing:0.83px;">Алтайский край</span></div>
<div class="cc" style="left:1041px;top:340px;width:239px;height:28px"><span style="top:6px;font-size:19px;line-height:19px;left:2.5px;letter-spacing:0.92px;">Барнаул</span></div>
<div class="cc" style="left:1281px;top:340px;width:234px;height:28px"><span style="top:6px;font-size:19px;line-height:19px;left:3.0px;letter-spacing:0.77px;">Ближние Черёмушки м-н</span></div>
<div class="cc" style="left:1516px;top:340px;width:95px;height:28px"><span style="top:6px;font-size:19px;line-height:19px;left:25.2px;letter-spacing:0.74px;">656050</span></div>
<div class="cc" style="left:1612px;top:340px;width:277px;height:28px"><span style="top:6px;font-size:19px;line-height:19px;left:2.5px;letter-spacing:0.60px;">Георгия Исакова, 149а к5</span></div>
<div style="left:0px;top:368px;width:41px;height:1px;background:#b8b8b8;"></div>
<div style="left:42px;top:368px;width:1847px;height:1px;background:#d4d4d4;"></div>
<div class="rowclip" style="top:369px;height:28px">
<span style="top:6px;font-size:19px;line-height:19px;left:16.3px;color:#303030;">3</span>
<span style="top:6px;font-size:19px;line-height:19px;left:45.5px;letter-spacing:0.79px;">Магис Спорт</span>
</div>
<div class="cc" style="left:338px;top:369px;width:357px;height:28px"><span style="top:6px;font-size:19px;line-height:19px;left:2.7px;letter-spacing:0.50px;">фитнес-клуб</span></div>
<div class="cc" style="left:696px;top:369px;width:95px;height:28px"><span style="top:6px;font-size:19px;line-height:19px;left:2.5px;letter-spacing:0.40px;">Россия</span></div>
<div class="cc" style="left:792px;top:369px;width:248px;height:28px"><span style="top:6px;font-size:19px;line-height:19px;left:4.0px;letter-spacing:0.83px;">Алтайский край</span></div>
<div class="cc" style="left:1041px;top:369px;width:239px;height:28px"><span style="top:6px;font-size:19px;line-height:19px;left:2.5px;letter-spacing:0.92px;">Барнаул</span></div>
<div class="cc" style="left:1516px;top:369px;width:95px;height:28px"><span style="top:6px;font-size:19px;line-height:19px;left:25.2px;letter-spacing:0.76px;">656006</span></div>
<div class="cc" style="left:1612px;top:369px;width:277px;height:28px"><span style="top:6px;font-size:19px;line-height:19px;left:2.5px;letter-spacing:0.30px;">Взлётная, 25</span></div>
<div style="left:0px;top:397px;width:41px;height:1px;background:#b8b8b8;"></div>
<div style="left:42px;top:397px;width:1847px;height:1px;background:#d4d4d4;"></div>
<div class="rowclip" style="top:398px;height:28px">
<span style="top:6px;font-size:19px;line-height:19px;left:16.3px;color:#303030;">4</span>
<span style="top:6px;font-size:19px;line-height:19px;left:45.5px;letter-spacing:0.77px;">Чудо остров</span>
</div>
<div class="cc" style="left:338px;top:398px;width:357px;height:28px"><span style="top:6px;font-size:19px;line-height:19px;left:3.3px;letter-spacing:0.82px;">детский центр развития и оздоровление</span></div>
<div class="cc" style="left:696px;top:398px;width:95px;height:28px"><span style="top:6px;font-size:19px;line-height:19px;left:2.5px;letter-spacing:0.40px;">Россия</span></div>
<div class="cc" style="left:792px;top:398px;width:248px;height:28px"><span style="top:6px;font-size:19px;line-height:19px;left:4.0px;letter-spacing:0.83px;">Алтайский край</span></div>
<div class="cc" style="left:1041px;top:398px;width:239px;height:28px"><span style="top:6px;font-size:19px;line-height:19px;left:2.5px;letter-spacing:0.92px;">Барнаул</span></div>
<div class="cc" style="left:1281px;top:398px;width:234px;height:28px"><span style="top:6px;font-size:19px;line-height:19px;left:3.6px;letter-spacing:0.83px;">2011 квартал</span></div>
<div class="cc" style="left:1516px;top:398px;width:95px;height:28px"><span style="top:6px;font-size:19px;line-height:19px;left:25.2px;letter-spacing:0.74px;">656070</span></div>
<div class="cc" style="left:1612px;top:398px;width:277px;height:28px"><span style="top:6px;font-size:19px;line-height:19px;left:2.5px;letter-spacing:0.70px;">Павловский тракт, 301а</span></div>
<div style="left:0px;top:426px;width:41px;height:1px;background:#b8b8b8;"></div>
<div style="left:42px;top:426px;width:1847px;height:1px;background:#d4d4d4;"></div>
<div class="rowclip" style="top:427px;height:28px">
<span style="top:6px;font-size:19px;line-height:19px;left:16.2px;color:#303030;">5</span>
<span style="top:6px;font-size:19px;line-height:19px;left:46.1px;letter-spacing:0.58px;">GravityFit</span>
</div>
<div class="cc" style="left:696px;top:427px;width:95px;height:28px"><span style="top:6px;font-size:19px;line-height:19px;left:2.5px;letter-spacing:0.40px;">Россия</span></div>
<div class="cc" style="left:792px;top:427px;width:248px;height:28px"><span style="top:6px;font-size:19px;line-height:19px;left:4.0px;letter-spacing:0.83px;">Алтайский край</span></div>
<div class="cc" style="left:1041px;top:427px;width:239px;height:28px"><span style="top:6px;font-size:19px;line-height:19px;left:2.5px;letter-spacing:0.92px;">Барнаул</span></div>
<div class="cc" style="left:1516px;top:427px;width:95px;height:28px"><span style="top:6px;font-size:19px;line-height:19px;left:25.2px;letter-spacing:0.78px;">656002</span></div>
<div class="cc" style="left:1612px;top:427px;width:277px;height:28px"><span style="top:6px;font-size:19px;line-height:19px;left:2.5px;letter-spacing:0.86px;">Комсомольский проспект, 12</span></div>
<div style="left:0px;top:455px;width:41px;height:1px;background:#b8b8b8;"></div>
<div style="left:42px;top:455px;width:1847px;height:1px;background:#d4d4d4;"></div>
<div class="rowclip" style="top:456px;height:28px">
<span style="top:6px;font-size:19px;line-height:19px;left:16.2px;color:#303030;">6</span>
<span style="top:6px;font-size:19px;line-height:19px;left:45.5px;letter-spacing:1.03px;">Карповое подворье</span>
</div>
<div class="cc" style="left:338px;top:456px;width:357px;height:28px"><span style="top:6px;font-size:19px;line-height:19px;left:2.4px;letter-spacing:0.82px;">база отдыха</span></div>
<div class="cc" style="left:696px;top:456px;width:95px;height:28px"><span style="top:6px;font-size:19px;line-height:19px;left:2.5px;letter-spacing:0.40px;">Россия</span></div>
<div class="cc" style="left:792px;top:456px;width:248px;height:28px"><span style="top:6px;font-size:19px;line-height:19px;left:4.0px;letter-spacing:0.83px;">Алтайский край</span></div>
<div class="cc" style="left:1041px;top:456px;width:239px;height:28px"><span style="top:6px;font-size:19px;line-height:19px;left:2.5px;letter-spacing:0.92px;">Барнаул</span></div>
<div style="left:0px;top:484px;width:41px;height:1px;background:#b8b8b8;"></div>
<div style="left:42px;top:484px;width:1847px;height:1px;background:#d4d4d4;"></div>
<div class="rowclip" style="top:485px;height:28px">
<span style="top:6px;font-size:19px;line-height:19px;left:16.2px;color:#303030;">7</span>
<span style="top:6px;font-size:19px;line-height:19px;left:47.0px;letter-spacing:0.75px;">Адриатика</span>
</div>
<div class="cc" style="left:338px;top:485px;width:357px;height:28px"><span style="top:6px;font-size:19px;line-height:19px;left:2.2px;letter-spacing:0.79px;">велнес-клуб</span></div>
<div class="cc" style="left:696px;top:485px;width:95px;height:28px"><span style="top:6px;font-size:19px;line-height:19px;left:2.5px;letter-spacing:0.40px;">Россия</span></div>
<div class="cc" style="left:792px;top:485px;width:248px;height:28px"><span style="top:6px;font-size:19px;line-height:19px;left:4.0px;letter-spacing:0.83px;">Алтайский край</span></div>
<div class="cc" style="left:1041px;top:485px;width:239px;height:28px"><span style="top:6px;font-size:19px;line-height:19px;left:2.5px;letter-spacing:0.92px;">Барнаул</span></div>
<div class="cc" style="left:1516px;top:485px;width:95px;height:28px"><span style="top:6px;font-size:19px;line-height:19px;left:25.2px;letter-spacing:0.78px;">656067</span></div>
<div class="cc" style="left:1612px;top:485px;width:277px;height:28px"><span style="top:6px;font-size:19px;line-height:19px;left:3.9px;letter-spacing:0.48px;">улица Попова, 167а</span></div>
<div style="left:0px;top:513px;width:41px;height:1px;background:#b8b8b8;"></div>
<div style="left:42px;top:513px;width:1847px;height:1px;background:#d4d4d4;"></div>
<div class="rowclip" style="top:514px;height:28px">
<span style="top:6px;font-size:19px;line-height:19px;left:16.2px;color:#303030;">8</span>
<span style="top:6px;font-size:19px;line-height:19px;left:45.5px;letter-spacing:1.09px;">Магис Дети</span>
</div>
<div class="cc" style="left:338px;top:514px;width:357px;height:28px"><span style="top:6px;font-size:19px;line-height:19px;left:3.3px;letter-spacing:0.79px;">детский клуб</span></div>
<div class="cc" style="left:696px;top:514px;width:95px;height:28px"><span style="top:6px;font-size:19px;line-height:19px;left:2.5px;letter-spacing:0.40px;">Россия</span></div>
<div class="cc" style="left:792px;top:514px;width:248px;height:28px"><span style="top:6px;font-size:19px;line-height:19px;left:4.0px;letter-spacing:0.83px;">Алтайский край</span></div>
<div class="cc" style="left:1041px;top:514px;width:239px;height:28px"><span style="top:6px;font-size:19px;line-height:19px;left:2.5px;letter-spacing:0.92px;">Барнаул</span></div>
<div class="cc" style="left:1516px;top:514px;width:95px;height:28px"><span style="top:6px;font-size:19px;line-height:19px;left:25.2px;letter-spacing:0.76px;">656006</span></div>
<div class="cc" style="left:1612px;top:514px;width:277px;height:28px"><span style="top:6px;font-size:19px;line-height:19px;left:2.5px;letter-spacing:0.30px;">Взлётная, 25</span></div>
<div style="left:0px;top:542px;width:41px;height:1px;background:#b8b8b8;"></div>
<div style="left:42px;top:542px;width:1847px;height:1px;background:#d4d4d4;"></div>
<div class="rowclip" style="top:543px;height:28px">
<span style="top:6px;font-size:19px;line-height:19px;left:16.2px;color:#303030;">9</span>
<span style="top:6px;font-size:19px;line-height:19px;left:45.5px;letter-spacing:-0.07px;">River KIDS</span>
</div>
<div class="cc" style="left:338px;top:543px;width:357px;height:28px"><span style="top:6px;font-size:19px;line-height:19px;left:3.3px;letter-spacing:0.79px;">детский клуб</span></div>
<div class="cc" style="left:696px;top:543px;width:95px;height:28px"><span style="top:6px;font-size:19px;line-height:19px;left:2.5px;letter-spacing:0.40px;">Россия</span></div>
<div class="cc" style="left:792px;top:543px;width:248px;height:28px"><span style="top:6px;font-size:19px;line-height:19px;left:4.0px;letter-spacing:0.83px;">Алтайский край</span></div>
<div class="cc" style="left:1041px;top:543px;width:239px;height:28px"><span style="top:6px;font-size:19px;line-height:19px;left:2.5px;letter-spacing:0.92px;">Барнаул</span></div>
<div class="cc" style="left:1516px;top:543px;width:95px;height:28px"><span style="top:6px;font-size:19px;line-height:19px;left:25.2px;letter-spacing:0.74px;">656065</span></div>
<div class="cc" style="left:1612px;top:543px;width:277px;height:28px"><span style="top:6px;font-size:19px;line-height:19px;left:3.0px;letter-spacing:0.38px;">Солнечная Поляна, 88 с1</span></div>
<div style="left:0px;top:571px;width:41px;height:1px;background:#b8b8b8;"></div>
<div style="left:42px;top:571px;width:1847px;height:1px;background:#d4d4d4;"></div>
<div class="rowclip" style="top:572px;height:28px">
<span style="top:6px;font-size:19px;line-height:19px;left:10.6px;color:#303030;">10</span>
<span style="top:6px;font-size:19px;line-height:19px;left:46.6px;letter-spacing:0.91px;">Территория здоровья</span>
</div>
<div class="cc" style="left:338px;top:572px;width:357px;height:28px"><span style="top:6px;font-size:19px;line-height:19px;left:2.2px;letter-spacing:0.72px;">многопрофильный реабилитационный</span></div>
<div class="cc" style="left:696px;top:572px;width:95px;height:28px"><span style="top:6px;font-size:19px;line-height:19px;left:2.5px;letter-spacing:0.40px;">Россия</span></div>
<div class="cc" style="left:792px;top:572px;width:248px;height:28px"><span style="top:6px;font-size:19px;line-height:19px;left:4.0px;letter-spacing:0.83px;">Алтайский край</span></div>
<div class="cc" style="left:1041px;top:572px;width:239px;height:28px"><span style="top:6px;font-size:19px;line-height:19px;left:2.5px;letter-spacing:0.92px;">Барнаул</span></div>
<div class="cc" style="left:1516px;top:572px;width:95px;height:28px"><span style="top:6px;font-size:19px;line-height:19px;left:25.2px;letter-spacing:0.74px;">656045</span></div>
<div class="cc" style="left:1612px;top:572px;width:277px;height:28px"><span style="top:6px;font-size:19px;line-height:19px;left:3.4px;letter-spacing:0.85px;">Змеиногорский тракт, 36е</span></div>
<div style="left:0px;top:600px;width:41px;height:1px;background:#b8b8b8;"></div>
<div style="left:42px;top:600px;width:1847px;height:1px;background:#d4d4d4;"></div>
<div class="rowclip" style="top:601px;height:28px">
<span style="top:6px;font-size:19px;line-height:19px;left:11.4px;color:#303030;">11</span>
<span style="top:6px;font-size:19px;line-height:19px;left:45.5px;letter-spacing:0.43px;">River</span>
</div>
<div class="cc" style="left:338px;top:601px;width:357px;height:28px"><span style="top:6px;font-size:19px;line-height:19px;left:2.2px;letter-spacing:0.76px;">центр здоровья и спорта</span></div>
<div class="cc" style="left:696px;top:601px;width:95px;height:28px"><span style="top:6px;font-size:19px;line-height:19px;left:2.5px;letter-spacing:0.40px;">Россия</span></div>
<div class="cc" style="left:792px;top:601px;width:248px;height:28px"><span style="top:6px;font-size:19px;line-height:19px;left:4.0px;letter-spacing:0.83px;">Алтайский край</span></div>
<div class="cc" style="left:1041px;top:601px;width:239px;height:28px"><span style="top:6px;font-size:19px;line-height:19px;left:2.5px;letter-spacing:0.92px;">Барнаул</span></div>
<div class="cc" style="left:1516px;top:601px;width:95px;height:28px"><span style="top:6px;font-size:19px;line-height:19px;left:25.2px;letter-spacing:0.74px;">656065</span></div>
<div class="cc" style="left:1612px;top:601px;width:277px;height:28px"><span style="top:6px;font-size:19px;line-height:19px;left:3.0px;letter-spacing:0.38px;">Солнечная Поляна, 88 с1</span></div>
<div style="left:0px;top:629px;width:41px;height:1px;background:#b8b8b8;"></div>
<div style="left:42px;top:629px;width:1847px;height:1px;background:#d4d4d4;"></div>
<div class="rowclip" style="top:630px;height:28px">
<span style="top:6px;font-size:19px;line-height:19px;left:10.7px;color:#303030;">12</span>
<span style="top:6px;font-size:19px;line-height:19px;left:47.0px;letter-spacing:0.96px;">Аквапарк</span>
</div>
<div class="cc" style="left:338px;top:630px;width:357px;height:28px"><span style="top:6px;font-size:19px;line-height:19px;left:2.3px;letter-spacing:0.74px;">развлекательно-оздоровительный центр</span></div>
<div class="cc" style="left:696px;top:630px;width:95px;height:28px"><span style="top:6px;font-size:19px;line-height:19px;left:2.5px;letter-spacing:0.40px;">Россия</span></div>
<div class="cc" style="left:792px;top:630px;width:248px;height:28px"><span style="top:6px;font-size:19px;line-height:19px;left:4.0px;letter-spacing:0.83px;">Алтайский край</span></div>
<div class="cc" style="left:1041px;top:630px;width:239px;height:28px"><span style="top:6px;font-size:19px;line-height:19px;left:2.5px;letter-spacing:0.92px;">Барнаул</span></div>
<div class="cc" style="left:1516px;top:630px;width:95px;height:28px"><span style="top:6px;font-size:19px;line-height:19px;left:25.2px;letter-spacing:0.78px;">656057</span></div>
<div class="cc" style="left:1612px;top:630px;width:277px;height:28px"><span style="top:6px;font-size:19px;line-height:19px;left:2.5px;letter-spacing:0.90px;">Павловский тракт, 251в/2</span></div>
<div style="left:0px;top:658px;width:41px;height:1px;background:#b8b8b8;"></div>
<div style="left:42px;top:658px;width:1847px;height:1px;background:#d4d4d4;"></div>
<div class="rowclip" style="top:659px;height:28px">
<span style="top:6px;font-size:19px;line-height:19px;left:10.6px;color:#303030;">13</span>
<span style="top:6px;font-size:19px;line-height:19px;left:46.1px;letter-spacing:1.15px;">Обь</span>
</div>
<div class="cc" style="left:338px;top:659px;width:357px;height:28px"><span style="top:6px;font-size:19px;line-height:19px;left:2.7px;letter-spacing:0.99px;">спорткомплекс</span></div>
<div class="cc" style="left:696px;top:659px;width:95px;height:28px"><span style="top:6px;font-size:19px;line-height:19px;left:2.5px;letter-spacing:0.40px;">Россия</span></div>
<div class="cc" style="left:792px;top:659px;width:248px;height:28px"><span style="top:6px;font-size:19px;line-height:19px;left:4.0px;letter-spacing:0.83px;">Алтайский край</span></div>
<div class="cc" style="left:1041px;top:659px;width:239px;height:28px"><span style="top:6px;font-size:19px;line-height:19px;left:2.5px;letter-spacing:0.92px;">Барнаул</span></div>
<div class="cc" style="left:1516px;top:659px;width:95px;height:28px"><span style="top:6px;font-size:19px;line-height:19px;left:25.2px;letter-spacing:0.76px;">656049</span></div>
<div class="cc" style="left:1612px;top:659px;width:277px;height:28px"><span style="top:6px;font-size:19px;line-height:19px;left:2.5px;letter-spacing:0.65px;">Папанинцев, 96а</span></div>
<div style="left:0px;top:687px;width:41px;height:1px;background:#b8b8b8;"></div>
<div style="left:42px;top:687px;width:1847px;height:1px;background:#d4d4d4;"></div>
<div class="rowclip" style="top:688px;height:28px">
<span style="top:6px;font-size:19px;line-height:19px;left:10.5px;color:#303030;">14</span>
<span style="top:6px;font-size:19px;line-height:19px;left:45.5px;letter-spacing:0.79px;">Магис Спорт</span>
</div>
<div class="cc" style="left:338px;top:688px;width:357px;height:28px"><span style="top:6px;font-size:19px;line-height:19px;left:2.7px;letter-spacing:0.50px;">фитнес-клуб</span></div>
<div class="cc" style="left:696px;top:688px;width:95px;height:28px"><span style="top:6px;font-size:19px;line-height:19px;left:2.5px;letter-spacing:0.40px;">Россия</span></div>
<div class="cc" style="left:792px;top:688px;width:248px;height:28px"><span style="top:6px;font-size:19px;line-height:19px;left:4.0px;letter-spacing:0.83px;">Алтайский край</span></div>
<div class="cc" style="left:1041px;top:688px;width:239px;height:28px"><span style="top:6px;font-size:19px;line-height:19px;left:2.5px;letter-spacing:0.92px;">Барнаул</span></div>
<div class="cc" style="left:1516px;top:688px;width:95px;height:28px"><span style="top:6px;font-size:19px;line-height:19px;left:25.2px;letter-spacing:0.76px;">656043</span></div>
<div class="cc" style="left:1612px;top:688px;width:277px;height:28px"><span style="top:6px;font-size:19px;line-height:19px;left:2.5px;letter-spacing:0.73px;">Красноармейский проспект, 1</span></div>
<div style="left:0px;top:716px;width:41px;height:1px;background:#b8b8b8;"></div>
<div style="left:42px;top:716px;width:1847px;height:1px;background:#d4d4d4;"></div>
<div class="rowclip" style="top:717px;height:28px">
<span style="top:6px;font-size:19px;line-height:19px;left:10.6px;color:#303030;">15</span>
<span style="top:6px;font-size:19px;line-height:19px;left:45.5px;letter-spacing:0.97px;">Крыша</span>
</div>
<div class="cc" style="left:338px;top:717px;width:357px;height:28px"><span style="top:6px;font-size:19px;line-height:19px;left:2.4px;letter-spacing:0.87px;">бассейн</span></div>
<div class="cc" style="left:696px;top:717px;width:95px;height:28px"><span style="top:6px;font-size:19px;line-height:19px;left:2.5px;letter-spacing:0.40px;">Россия</span></div>
<div class="cc" style="left:792px;top:717px;width:248px;height:28px"><span style="top:6px;font-size:19px;line-height:19px;left:4.0px;letter-spacing:0.83px;">Алтайский край</span></div>
<div class="cc" style="left:1041px;top:717px;width:239px;height:28px"><span style="top:6px;font-size:19px;line-height:19px;left:2.5px;letter-spacing:0.92px;">Барнаул</span></div>
<div class="cc" style="left:1516px;top:717px;width:95px;height:28px"><span style="top:6px;font-size:19px;line-height:19px;left:25.2px;letter-spacing:0.76px;">656043</span></div>
<div class="cc" style="left:1612px;top:717px;width:277px;height:28px"><span style="top:6px;font-size:19px;line-height:19px;left:2.5px;letter-spacing:0.67px;">Мало-Олонская, 28</span></div>
<div style="left:0px;top:745px;width:41px;height:1px;background:#b8b8b8;"></div>
<div style="left:42px;top:745px;width:1847px;height:1px;background:#d4d4d4;"></div>
<div class="rowclip" style="top:746px;height:28px">
<span style="top:6px;font-size:19px;line-height:19px;left:10.6px;color:#303030;">16</span>
<span style="top:6px;font-size:19px;line-height:19px;left:45.5px;letter-spacing:0.88px;">Волки и ёлки</span>
</div>
<div class="cc" style="left:338px;top:746px;width:357px;height:28px"><span style="top:6px;font-size:19px;line-height:19px;left:2.4px;letter-spacing:0.82px;">база отдыха</span></div>
<div class="cc" style="left:696px;top:746px;width:95px;height:28px"><span style="top:6px;font-size:19px;line-height:19px;left:2.5px;letter-spacing:0.40px;">Россия</span></div>
<div class="cc" style="left:792px;top:746px;width:248px;height:28px"><span style="top:6px;font-size:19px;line-height:19px;left:4.0px;letter-spacing:0.83px;">Алтайский край</span></div>
<div class="cc" style="left:1041px;top:746px;width:239px;height:28px"><span style="top:6px;font-size:19px;line-height:19px;left:2.5px;letter-spacing:0.92px;">Барнаул</span></div>
<div class="cc" style="left:1281px;top:746px;width:234px;height:28px"><span style="top:6px;font-size:19px;line-height:19px;left:3.5px;letter-spacing:0.71px;">СНТ Мичуринцев</span></div>
<div class="cc" style="left:1516px;top:746px;width:95px;height:28px"><span style="top:6px;font-size:19px;line-height:19px;left:25.2px;letter-spacing:0.76px;">656006</span></div>
<div class="cc" style="left:1612px;top:746px;width:277px;height:28px"><span style="top:6px;font-size:19px;line-height:19px;left:2.5px;letter-spacing:0.54px;">Власихинская улица, 67а/324</span></div>
<div style="left:0px;top:774px;width:41px;height:1px;background:#b8b8b8;"></div>
<div style="left:42px;top:774px;width:1847px;height:1px;background:#d4d4d4;"></div>
<div class="rowclip" style="top:775px;height:28px">
<span style="top:6px;font-size:19px;line-height:19px;left:10.7px;color:#303030;">17</span>
<span style="top:6px;font-size:19px;line-height:19px;left:45.5px;letter-spacing:1.09px;">Магис Дети</span>
</div>
<div class="cc" style="left:338px;top:775px;width:357px;height:28px"><span style="top:6px;font-size:19px;line-height:19px;left:3.3px;letter-spacing:0.79px;">детский клуб</span></div>
<div class="cc" style="left:696px;top:775px;width:95px;height:28px"><span style="top:6px;font-size:19px;line-height:19px;left:2.5px;letter-spacing:0.40px;">Россия</span></div>
<div class="cc" style="left:792px;top:775px;width:248px;height:28px"><span style="top:6px;font-size:19px;line-height:19px;left:4.0px;letter-spacing:0.83px;">Алтайский край</span></div>
<div class="cc" style="left:1041px;top:775px;width:239px;height:28px"><span style="top:6px;font-size:19px;line-height:19px;left:2.5px;letter-spacing:0.92px;">Барнаул</span></div>
<div class="cc" style="left:1516px;top:775px;width:95px;height:28px"><span style="top:6px;font-size:19px;line-height:19px;left:25.2px;letter-spacing:0.76px;">656043</span></div>
<div class="cc" style="left:1612px;top:775px;width:277px;height:28px"><span style="top:6px;font-size:19px;line-height:19px;left:2.5px;letter-spacing:0.73px;">Красноармейский проспект, 1</span></div>
<div style="left:0px;top:803px;width:41px;height:1px;background:#b8b8b8;"></div>
<div style="left:42px;top:803px;width:1847px;height:1px;background:#d4d4d4;"></div>
<div class="rowclip" style="top:804px;height:28px">
<span style="top:6px;font-size:19px;line-height:19px;left:10.6px;color:#303030;">18</span>
<span style="top:6px;font-size:19px;line-height:19px;left:45.5px;letter-spacing:-0.12px;">Рельеф</span>
</div>
<div class="cc" style="left:338px;top:804px;width:357px;height:28px"><span style="top:6px;font-size:19px;line-height:19px;left:3.2px;letter-spacing:0.92px;">тренажерный зал</span></div>
<div class="cc" style="left:696px;top:804px;width:95px;height:28px"><span style="top:6px;font-size:19px;line-height:19px;left:2.5px;letter-spacing:0.40px;">Россия</span></div>
<div class="cc" style="left:792px;top:804px;width:248px;height:28px"><span style="top:6px;font-size:19px;line-height:19px;left:4.0px;letter-spacing:0.83px;">Алтайский край</span></div>
<div class="cc" style="left:1041px;top:804px;width:239px;height:28px"><span style="top:6px;font-size:19px;line-height:19px;left:2.5px;letter-spacing:0.92px;">Барнаул</span></div>
<div class="cc" style="left:1281px;top:804px;width:234px;height:28px"><span style="top:6px;font-size:19px;line-height:19px;left:3.6px;letter-spacing:0.69px;">2002а квартал</span></div>
<div class="cc" style="left:1516px;top:804px;width:95px;height:28px"><span style="top:6px;font-size:19px;line-height:19px;left:25.2px;letter-spacing:0.76px;">656006</span></div>
<div class="cc" style="left:1612px;top:804px;width:277px;height:28px"><span style="top:6px;font-size:19px;line-height:19px;left:2.5px;letter-spacing:0.38px;">Власихинская улица, 160а</span></div>
<div style="left:0px;top:832px;width:41px;height:1px;background:#b8b8b8;"></div>
<div style="left:42px;top:832px;width:1847px;height:1px;background:#d4d4d4;"></div>
<div class="rowclip" style="top:833px;height:28px">
<span style="top:6px;font-size:19px;line-height:19px;left:10.6px;color:#303030;">19</span>
<span style="top:6px;font-size:19px;line-height:19px;left:47.0px;letter-spacing:0.78px;">Аврора</span>
</div>
<div class="cc" style="left:338px;top:833px;width:357px;height:28px"><span style="top:6px;font-size:19px;line-height:19px;left:2.7px;letter-spacing:0.50px;">фитнес-клуб</span></div>
<div class="cc" style="left:696px;top:833px;width:95px;height:28px"><span style="top:6px;font-size:19px;line-height:19px;left:2.5px;letter-spacing:0.40px;">Россия</span></div>
<div class="cc" style="left:792px;top:833px;width:248px;height:28px"><span style="top:6px;font-size:19px;line-height:19px;left:4.0px;letter-spacing:0.83px;">Алтайский край</span></div>
<div class="cc" style="left:1041px;top:833px;width:239px;height:28px"><span style="top:6px;font-size:19px;line-height:19px;left:2.5px;letter-spacing:0.92px;">Барнаул</span></div>
<div class="cc" style="left:1516px;top:833px;width:95px;height:28px"><span style="top:6px;font-size:19px;line-height:19px;left:25.2px;letter-spacing:0.78px;">656037</span></div>
<div class="cc" style="left:1612px;top:833px;width:277px;height:28px"><span style="top:6px;font-size:19px;line-height:19px;left:2.5px;letter-spacing:0.65px;">Чеглецова, 6</span></div>
<div style="left:0px;top:861px;width:41px;height:1px;background:#b8b8b8;"></div>
<div style="left:42px;top:861px;width:1847px;height:1px;background:#d4d4d4;"></div>
<div class="rowclip" style="top:862px;height:28px">
<span style="top:6px;font-size:19px;line-height:19px;left:10.8px;color:#303030;">20</span>
<span style="top:6px;font-size:19px;line-height:19px;left:45.5px;letter-spacing:1.19px;">Родничок</span>
</div>
<div class="cc" style="left:338px;top:862px;width:357px;height:28px"><span style="top:6px;font-size:19px;line-height:19px;left:2.7px;letter-spacing:0.75px;">сеть семейных центров</span></div>
<div class="cc" style="left:696px;top:862px;width:95px;height:28px"><span style="top:6px;font-size:19px;line-height:19px;left:2.5px;letter-spacing:0.40px;">Россия</span></div>
<div class="cc" style="left:792px;top:862px;width:248px;height:28px"><span style="top:6px;font-size:19px;line-height:19px;left:4.0px;letter-spacing:0.83px;">Алтайский край</span></div>
<div class="cc" style="left:1041px;top:862px;width:239px;height:28px"><span style="top:6px;font-size:19px;line-height:19px;left:2.5px;letter-spacing:0.92px;">Барнаул</span></div>
<div class="cc" style="left:1516px;top:862px;width:95px;height:28px"><span style="top:6px;font-size:19px;line-height:19px;left:25.2px;letter-spacing:0.74px;">656058</span></div>
<div class="cc" style="left:1612px;top:862px;width:277px;height:28px"><span style="top:6px;font-size:19px;line-height:19px;left:3.9px;letter-spacing:0.67px;">улица Шумакова, 74Б</span></div>
<div style="left:0px;top:890px;width:41px;height:1px;background:#b8b8b8;"></div>
<div style="left:42px;top:890px;width:1847px;height:1px;background:#d4d4d4;"></div>
<div class="rowclip" style="top:891px;height:28px">
<span style="top:6px;font-size:19px;line-height:19px;left:11.0px;color:#303030;">21</span>
<span style="top:6px;font-size:19px;line-height:19px;left:47.0px;letter-spacing:0.78px;">Аврора</span>
</div>
<div class="cc" style="left:338px;top:891px;width:357px;height:28px"><span style="top:6px;font-size:19px;line-height:19px;left:2.7px;letter-spacing:0.50px;">фитнес-клуб</span></div>
<div class="cc" style="left:696px;top:891px;width:95px;height:28px"><span style="top:6px;font-size:19px;line-height:19px;left:2.5px;letter-spacing:0.40px;">Россия</span></div>
<div class="cc" style="left:792px;top:891px;width:248px;height:28px"><span style="top:6px;font-size:19px;line-height:19px;left:4.0px;letter-spacing:0.83px;">Алтайский край</span></div>
<div class="cc" style="left:1041px;top:891px;width:239px;height:28px"><span style="top:6px;font-size:19px;line-height:19px;left:2.5px;letter-spacing:0.92px;">Барнаул</span></div>
<div class="cc" style="left:1516px;top:891px;width:95px;height:28px"><span style="top:6px;font-size:19px;line-height:19px;left:25.2px;letter-spacing:0.74px;">656015</span></div>
<div class="cc" style="left:1612px;top:891px;width:277px;height:28px"><span style="top:6px;font-size:19px;line-height:19px;left:2.7px;letter-spacing:0.50px;">проспект Строителей, 8а</span></div>
<div style="left:0px;top:919px;width:41px;height:1px;background:#b8b8b8;"></div>
<div style="left:42px;top:919px;width:1847px;height:1px;background:#d4d4d4;"></div>
<div class="rowclip" style="top:920px;height:21px">
<span style="top:6px;font-size:19px;line-height:19px;left:11.0px;color:#303030;">22</span>
<span style="top:6px;font-size:19px;line-height:19px;left:47.0px;letter-spacing:0.75px;">Адриатика</span>
</div>
<div class="cc" style="left:338px;top:920px;width:357px;height:21px"><span style="top:6px;font-size:19px;line-height:19px;left:2.4px;letter-spacing:0.96px;">бассейн №3</span></div>
<div class="cc" style="left:696px;top:920px;width:95px;height:21px"><span style="top:6px;font-size:19px;line-height:19px;left:2.5px;letter-spacing:0.40px;">Россия</span></div>
<div class="cc" style="left:792px;top:920px;width:248px;height:21px"><span style="top:6px;font-size:19px;line-height:19px;left:4.0px;letter-spacing:0.83px;">Алтайский край</span></div>
<div class="cc" style="left:1041px;top:920px;width:239px;height:21px"><span style="top:6px;font-size:19px;line-height:19px;left:2.5px;letter-spacing:0.92px;">Барнаул</span></div>
<div class="cc" style="left:1516px;top:920px;width:95px;height:21px"><span style="top:6px;font-size:19px;line-height:19px;left:25.2px;letter-spacing:0.78px;">656067</span></div>
<div class="cc" style="left:1612px;top:920px;width:277px;height:21px"><span style="top:6px;font-size:19px;line-height:19px;left:3.9px;letter-spacing:0.55px;">улица Попова, 167</span></div>
<div style="left:337px;top:311px;width:1px;height:630px;background:#d4d4d4;"></div>
<div style="left:695px;top:311px;width:1px;height:630px;background:#d4d4d4;"></div>
<div style="left:791px;top:311px;width:1px;height:630px;background:#d4d4d4;"></div>
<div style="left:1040px;top:311px;width:1px;height:630px;background:#d4d4d4;"></div>
<div style="left:1280px;top:311px;width:1px;height:630px;background:#d4d4d4;"></div>
<div style="left:1515px;top:311px;width:1px;height:630px;background:#d4d4d4;"></div>
<div style="left:1611px;top:311px;width:1px;height:630px;background:#d4d4d4;"></div>
<div style="left:1889px;top:311px;width:1px;height:630px;background:#d4d4d4;"></div>
<div style="left:41px;top:311px;width:1px;height:630px;background:#b8b8b8;"></div>
<div style="left:1889px;top:310px;width:1px;height:632px;background:#a0a0a0;"></div>
<div class="fb" style="left:312px;top:313px"><i></i></div>
<div class="fb" style="left:670px;top:313px"><i></i></div>
<div class="fb" style="left:766px;top:313px"><i></i></div>
<div class="fb" style="left:1015px;top:313px"><i></i></div>
<div class="fb" style="left:1255px;top:313px"><i></i></div>
<div class="fb" style="left:1490px;top:313px"><i></i></div>
<div class="fb" style="left:1586px;top:313px"><i></i></div>
<div style="left:41px;top:309px;width:294px;height:28px;border:2px solid #217346;box-sizing:content-box"></div>
<div style="left:333px;top:335px;width:6px;height:6px;background:#217346;border:1px solid #fff;box-sizing:content-box;"></div>
<!-- bottom -->
<div style="left:1890px;top:283px;width:29px;height:658px;background:#e6e6e6;"></div>
<div style="left:1892px;top:333px;width:25px;height:586px;background:#dadada;"></div>
<div style="left:1892px;top:283px;width:25px;height:26px;background:#fff;border:1px solid #ababab;box-sizing:border-box;"></div>
<svg style="left:1899px;top:292px" width="11" height="6"><path d="M0 6H11L5.5 0Z" fill="#666"/></svg>
<div style="left:1892px;top:308px;width:25px;height:26px;background:#fff;border:1px solid #ababab;box-sizing:border-box;"></div>
<div style="left:1892px;top:919px;width:25px;height:24px;background:#fff;border:1px solid #d0d0d0;box-sizing:border-box;"></div>
<svg style="left:1899px;top:928px" width="11" height="6"><path d="M0 0H11L5.5 6Z" fill="#666"/></svg>
<div style="left:0px;top:941px;width:1919px;height:34px;background:#e6e6e6;"></div>
<div style="left:0px;top:941px;width:1890px;height:1px;background:#9a9a9a;"></div>
<svg style="left:31px;top:952px" width="7" height="12"><path d="M6.5 0.5V11.5L0.5 6Z" fill="#c6c6c6"/></svg>
<svg style="left:64px;top:952px" width="7" height="12"><path d="M0.5 0.5V11.5L6.5 6Z" fill="#c6c6c6"/></svg>
<div style="left:118px;top:941px;width:356px;height:31px;background:#fff;border-bottom:2px solid #217346;border-left:1px solid #ababab;border-right:1px solid #ababab;box-sizing:border-box;"></div>
<span style="top:947px;font-size:19px;line-height:19px;left:130.4px;letter-spacing:0.23px;color:#217346;font-weight:bold;">База всех бассейнов РФ_ Бассейн</span>
<svg style="left:514px;top:948px" width="22" height="22" viewBox="0 0 22 22"><circle cx="11" cy="11" r="9.5" fill="none" stroke="#777" stroke-width="1.2"/><path d="M11 6V16M6 11H16" stroke="#777" stroke-width="1.4"/></svg>
<div style="left:1148px;top:950px;width:3px;height:3px;background:#ababab;"></div>
<div style="left:1148px;top:956px;width:3px;height:3px;background:#ababab;"></div>
<div style="left:1148px;top:962px;width:3px;height:3px;background:#ababab;"></div>
<div style="left:1168px;top:946px;width:723px;height:24px;background:#dadada;"></div>
<div style="left:1168px;top:946px;width:25px;height:24px;background:#fff;border:1px solid #c6c6c6;box-sizing:border-box;"></div>
<svg style="left:1176px;top:951px" width="7" height="13"><path d="M7 0V13L0.5 6.5Z" fill="#6e6e6e"/></svg>
<div style="left:1193px;top:945px;width:336px;height:25px;background:#fff;border:1px solid #a4a4a4;box-sizing:border-box;"></div>
<div style="left:1867px;top:946px;width:24px;height:24px;background:#fff;border:1px solid #c6c6c6;box-sizing:border-box;"></div>
<svg style="left:1876px;top:951px" width="7" height="13"><path d="M0 0V13L6.5 6.5Z" fill="#6e6e6e"/></svg>
<div style="left:0px;top:975px;width:1919px;height:32px;background:#f1f1f1;"></div>
<div style="left:0px;top:975px;width:1919px;height:1px;background:#d0d0d0;"></div>
<span style="top:984px;font-size:15px;line-height:15px;left:6.5px;letter-spacing:0.90px;color:#555;">Готово</span>
<div style="left:1530px;top:976px;width:44px;height:31px;background:#d2d2d2;"></div>
<svg style="left:1542px;top:981px" width="20" height="20" viewBox="0 0 20 20"><path d="M1.500 1.500H18.500V18.500H1.500Z M1.500 7.500H18.500 M1.500 12.500H18.500 M7.500 1.500V18.500 M12.500 1.500V18.500" fill="none" stroke="#686868" stroke-width="1.100"/></svg>
<svg style="left:1587px;top:981px" width="20" height="20" viewBox="0 0 20 20"><path d="M1.500 1.500H18.500V18.500H1.500Z" fill="none" stroke="#686868" stroke-width="1.100"/><path d="M5.500 4.500H14.500V15.500H5.500Z M7.500 7.500H12.500 M7.500 10H12.500 M7.500 12.500H12.500" fill="none" stroke="#686868" stroke-width="1"/></svg>
<svg style="left:1632px;top:981px" width="20" height="20" viewBox="0 0 20 20"><path d="M1.500 1.500H18.500V18.500H1.500Z" fill="none" stroke="#686868" stroke-width="1.100"/><path d="M7.500 1.500V10.500H1.500 M12.500 1.500V10.500" fill="none" stroke="#686868" stroke-width="1.100"/><path d="M7.500 10.500H18.500" fill="none" stroke="#9a9a9a" stroke-width="1"/></svg>
<div style="left:1670px;top:990px;width:11px;height:3px;background:#666;"></div>
<div style="left:1688px;top:991px;width:148px;height:1px;background:#8c8c8c;"></div>
<div style="left:1758px;top:983px;width:6px;height:16px;background:#666;"></div>
<div style="left:1842px;top:990px;width:13px;height:3px;background:#666;"></div>
<div style="left:1847px;top:985px;width:3px;height:13px;background:#666;"></div>
<span style="top:984px;font-size:15px;line-height:15px;left:1872.9px;letter-spacing:0.27px;color:#555;">100%</span>
</body></html>
